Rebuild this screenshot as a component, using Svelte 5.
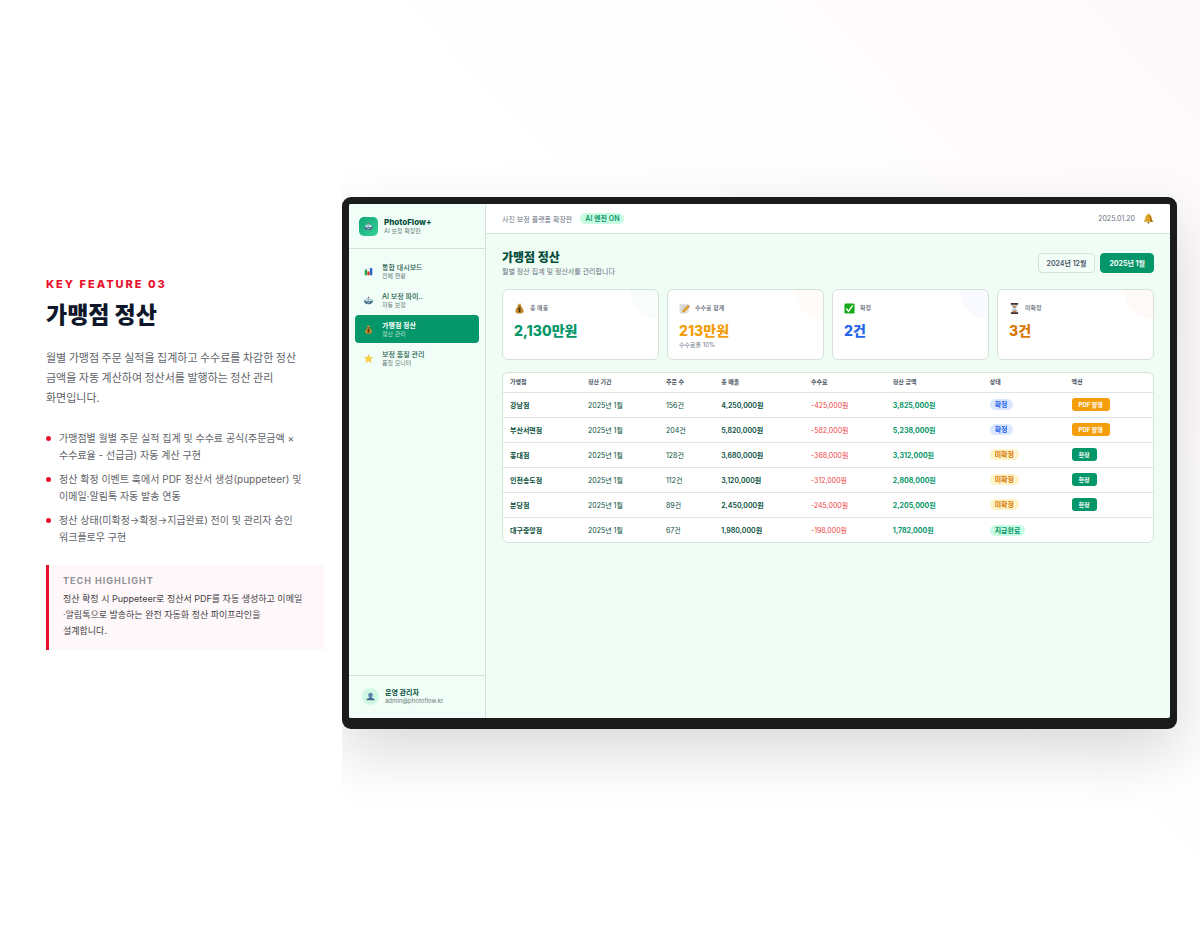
<script>
	const features = [
		'가맹점별 월별 주문 실적 집계 및 수수료 공식(주문금액 × 수수료율 - 선급금) 자동 계산 구현',
		'정산 확정 이벤트 훅에서 PDF 정산서 생성(puppeteer) 및 이메일·알림톡 자동 발송 연동',
		'정산 상태(미확정→확정→지급완료) 전이 및 관리자 승인 워크플로우 구현'
	];

	const menu = [
		{ icon: 'chart', title: '통합 대시보드', sub: '전체 현황' },
		{ icon: 'robot', title: 'AI 보정 파이..', sub: '자동 보정' },
		{ icon: 'money', title: '가맹점 정산', sub: '정산 관리' },
		{ icon: 'star', title: '보정 품질 관리', sub: '품질 모니터' }
	];

	const cards = [
		{ icon: 'money', label: '총 매출', value: '2,130만원', tone: 'green' },
		{ icon: 'memo', label: '수수료 합계', value: '213만원', note: '수수료율 10%', tone: 'amber' },
		{ icon: 'check', label: '확정', value: '2건', tone: 'blue' },
		{ icon: 'hourglass', label: '미확정', value: '3건', tone: 'orange' }
	];

	const heads = [
		{ text: '가맹점', width: 12 },
		{ text: '정산 기간', width: 12 },
		{ text: '주문 수', width: 8.5 },
		{ text: '총 매출', width: 13.8 },
		{ text: '수수료', width: 12.6 },
		{ text: '정산 금액', width: 14.9 },
		{ text: '상태', width: 12.6 },
		{ text: '액션', width: 13.6 }
	];

	const rows = [
		{ name: '강남점', orders: 156, sales: '4,250,000', fee: '425,000', total: '3,825,000', status: '확정' },
		{ name: '부산서면점', orders: 204, sales: '5,820,000', fee: '582,000', total: '5,238,000', status: '확정' },
		{ name: '홍대점', orders: 128, sales: '3,680,000', fee: '368,000', total: '3,312,000', status: '미확정' },
		{ name: '인천송도점', orders: 112, sales: '3,120,000', fee: '312,000', total: '2,808,000', status: '미확정' },
		{ name: '분당점', orders: 89, sales: '2,450,000', fee: '245,000', total: '2,205,000', status: '미확정' },
		{ name: '대구중앙점', orders: 67, sales: '1,980,000', fee: '198,000', total: '1,782,000', status: '지급완료' }
	];

	const tones = { 확정: 'blue', 미확정: 'amber', 지급완료: 'green' };

	let active = $state(2);
	let month = $state('2025년 1월');
</script>

{#snippet icon(name)}
	<svg class="icon" viewBox="0 0 24 24" aria-hidden="true">
		{#if name === 'chart'}
			<rect x="2" y="2" width="20" height="20" fill="#e8edf2" />
			<rect x="2" y="7" width="6" height="15" fill="#22a447" />
			<rect x="9" y="12" width="6" height="10" fill="#d6362c" />
			<rect x="16" y="3" width="6" height="19" fill="#2563c9" />
		{:else if name === 'robot'}
			<path d="M12 2v5" stroke="#7b98a8" stroke-width="2" />
			<circle cx="12" cy="4" r="2" fill="#b9645f" />
			<rect x="0" y="11" width="4" height="6" rx="1" fill="#4b7f9e" />
			<rect x="20" y="11" width="4" height="6" rx="1" fill="#4b7f9e" />
			<path d="M3 12q0-6 9-6t9 6v4q0 6-9 6t-9-6z" fill="#a5c3d0" />
			<path d="M3 14h18v3q-1 5-9 5t-9-5z" fill="#41667d" />
			<circle cx="8" cy="12" r="2" fill="#e9fbff" />
			<circle cx="16" cy="12" r="2" fill="#e9fbff" />
			<path d="M8 18h8" stroke="#c3d6df" stroke-width="2" />
		{:else if name === 'money'}
			<path d="M8 1q4 2 8 0l-2 6h-4z" fill="#d9a23b" />
			<path d="M9 7h6q7 6 6 12-1 4-9 4t-9-4Q2 13 9 7z" fill="#c58a2a" />
			<path d="M8 7h8" stroke="#7a4d12" stroke-width="2" />
			<path d="M15 12q-3-2-5 0t2 3 2 3-5 0M12 10v10" fill="none" stroke="#4d3310" stroke-width="2" />
		{:else if name === 'star'}
			<path
				d="M12 1l3 8h8l-6 6 2 8-7-5-7 5 2-8-6-6h8z"
				fill="#fbd23c"
				stroke="#eda918"
			/>
		{:else if name === 'memo'}
			<path d="M2 3h18v16l-3 3H2z" fill="#e6e6e3" stroke="#bdbdb8" />
			<path d="M5 7h11M5 11h8M5 15h5" stroke="#9a9fa3" />
			<path d="M20 5l3 3L12 19l-4 1 1-4z" fill="#f3a81c" stroke="#a8690c" />
			<path d="M20 5l3 3-2 2-3-3z" fill="#e67d78" />
		{:else if name === 'check'}
			<rect x="1" y="1" width="22" height="22" rx="3" fill="#14a914" />
			<path d="M5 12l5 6 9-13" fill="none" stroke="#fff" stroke-width="3" />
		{:else if name === 'hourglass'}
			<path d="M6 3h12q0 6-4 9 4 3 4 9H6q0-6 4-9-4-3-4-9z" fill="#d5dbdf" stroke="#8d959b" />
			<path d="M8 6h8q-1 4-4 5-3-1-4-5zM8 20q1-5 4-5t4 5z" fill="#b98257" />
			<path d="M4 2h16M4 22h16" stroke="#4a2f26" stroke-width="4" />
		{:else if name === 'bell'}
			<path d="M12 1q2 0 2 2 5 2 5 8 0 5 4 8H1q4-3 4-8 0-6 5-8 0-2 2-2z" fill="#dba225" />
			<path d="M14 4q4 2 4 8 0 4 4 7h-6q1-8-2-15z" fill="#96640f" />
			<circle cx="12" cy="21" r="2" fill="#8a5a0d" />
		{:else if name === 'user'}
			<path d="M12 2q6 0 6 6 0 4-3 7v2H9v-2Q6 12 6 8q0-6 6-6z" fill="#5b82a8" />
			<path d="M1 22q0-5 8-6h6q8 1 8 6z" fill="#41698f" />
		{/if}
	</svg>
{/snippet}

<main class="slide">
	<section class="intro">
		<p class="eyebrow">KEY FEATURE 03</p>
		<h1>가맹점 정산</h1>
		<p class="lead">
			월별 가맹점 주문 실적을 집계하고 수수료를 차감한 정산 금액을 자동 계산하여 정산서를 발행하는 정산 관리 화면입니다.
		</p>
		<ul class="features">
			{#each features as feature}
				<li>{feature}</li>
			{/each}
		</ul>
		<aside class="highlight">
			<h2>TECH HIGHLIGHT</h2>
			<p>
				정산 확정 시 Puppeteer로 정산서 PDF를 자동 생성하고 이메일<br />·알림톡으로 발송하는 완전 자동화 정산
				파이프라인을<br />설계합니다.
			</p>
		</aside>
	</section>

	<section class="stage">
		<div class="device">
			<div class="screen">
				<nav class="sidebar">
					<div class="brand">
						<span class="logo">{@render icon('robot')}</span>
						<div>
							<p class="brand-name">PhotoFlow+</p>
							<p class="tiny">AI 보정 확장판</p>
						</div>
					</div>
					<div class="menu">
						{#each menu as item, i}
							<button class="menu-item" class:active={i === active} onclick={() => (active = i)}>
								{@render icon(item.icon)}
								<span class="menu-text">
									<span class="menu-title">{item.title}</span>
									<span class="tiny">{item.sub}</span>
								</span>
							</button>
						{/each}
					</div>
					<div class="account">
						<span class="avatar">{@render icon('user')}</span>
						<div>
							<p class="account-name">운영 관리자</p>
							<p class="tiny">admin@photoflow.kr</p>
						</div>
					</div>
				</nav>

				<div class="content">
					<header class="topbar">
						<span>사진 보정 플랫폼 확장판</span>
						<span class="pill green">AI 엔진 ON</span>
						<time datetime="2025-01-20">2025.01.20</time>
						<button class="bell" aria-label="알림">{@render icon('bell')}</button>
					</header>

					<div class="body">
						<div class="page-head">
							<div>
								<h2>가맹점 정산</h2>
								<p>월별 정산 집계 및 정산서를 관리합니다</p>
							</div>
							<div class="months">
								{#each ['2024년 12월', '2025년 1월'] as m}
									<button class:active={m === month} onclick={() => (month = m)}>{m}</button>
								{/each}
							</div>
						</div>

						<div class="cards">
							{#each cards as card}
								<article class="card {card.tone}">
									<p class="card-label">{@render icon(card.icon)}{card.label}</p>
									<p class="card-value">{card.value}</p>
									{#if card.note}
										<p class="card-note">{card.note}</p>
									{/if}
								</article>
							{/each}
						</div>

						<div class="table-box">
							<table>
								<thead>
									<tr>
										{#each heads as head}
											<th scope="col" style="width: {head.width}%">{head.text}</th>
										{/each}
									</tr>
								</thead>
								<tbody>
									{#each rows as row}
										<tr>
											<td class="name">{row.name}</td>
											<td>2025년 1월</td>
											<td>{row.orders}건</td>
											<td class="sales">{row.sales}원</td>
											<td class="fee">-{row.fee}원</td>
											<td class="total">{row.total}원</td>
											<td><span class="pill {tones[row.status]}">{row.status}</span></td>
											<td>
												{#if row.status === '확정'}
													<button class="action pdf">PDF 발행</button>
												{:else if row.status === '미확정'}
													<button class="action">확정</button>
												{/if}
											</td>
										</tr>
									{/each}
								</tbody>
							</table>
						</div>
					</div>
				</div>
			</div>
		</div>
	</section>
</main>

<style>
	:global(body) {
		margin: 0;
		background: #fff;
	}

	.slide {
		display: grid;
		grid-template-columns: 342px minmax(0, 1fr);
		min-height: 100vh;
		color: #064e3b;
		font-family: Inter, 'Noto Sans CJK KR', sans-serif;
		word-break: keep-all;
	}

	h1,
	h2,
	p,
	ul {
		margin: 0;
		padding: 0;
	}

	button {
		border: 0;
		font-family: inherit;
		cursor: pointer;
	}

	.icon {
		display: block;
		flex: none;
		width: 9px;
		height: 9px;
	}

	/* left column */
	.intro {
		position: relative;
		z-index: 1;
		display: flex;
		flex-direction: column;
		justify-content: center;
		padding: 0 18px 0 46px;
		background: #fff;
	}

	.eyebrow {
		color: #e8112d;
		font-size: 11px;
		font-weight: 800;
		letter-spacing: 2px;
		line-height: 14px;
	}

	h1 {
		margin-top: 8px;
		color: #0f172a;
		font-size: 23px;
		font-weight: 800;
		line-height: 32px;
	}

	.lead {
		margin-top: 16px;
		color: #5f6368;
		font-family: 'Noto Sans CJK KR', sans-serif;
		font-size: 11px;
		line-height: 20px;
	}

	.features {
		display: grid;
		gap: 7px;
		margin-top: 23px;
		list-style: none;
	}

	.features li {
		display: flex;
		gap: 8px;
		color: #5f6368;
		font-size: 10px;
		line-height: 17px;
	}

	.features li::before {
		content: '';
		flex: none;
		width: 5px;
		height: 5px;
		margin-top: 6px;
		border-radius: 50%;
		background: #e8112d;
	}

	.highlight {
		margin-top: 19px;
		padding: 8px 14px 11px;
		border-left: 3px solid #e8112d;
		background: #fff8fa;
	}

	.highlight h2 {
		margin-bottom: 2px;
		color: #909096;
		font-size: 9px;
		font-weight: 700;
		letter-spacing: 1px;
		line-height: 16px;
	}

	.highlight p {
		color: #3f3f46;
		font-size: 9px;
		line-height: 16px;
	}

	/* monitor */
	.stage {
		display: flex;
		align-items: center;
		padding-right: 23px;
		background: linear-gradient(to top right, #fff 50%, #fdf9fa);
	}

	.device {
		flex: 1;
		padding: 7px 7px 11px;
		border-radius: 9px;
		background: #1b1b1b;
		box-shadow: 0 24px 60px rgba(0, 0, 0, 0.15);
	}

	.screen {
		display: grid;
		grid-template-columns: 137px minmax(0, 1fr);
		aspect-ratio: 16 / 10;
		overflow: hidden;
		border-radius: 2px;
		background: #effdf5;
	}

	.sidebar {
		display: flex;
		flex-direction: column;
		box-sizing: border-box;
		border-right: 1px solid #d5e2dc;
		background: #f1fef8;
	}

	.tiny {
		color: #6b7f7a;
		font-size: 6px;
		line-height: 8px;
	}

	.brand {
		display: flex;
		align-items: center;
		gap: 6px;
		height: 44px;
		padding-left: 10px;
		border-bottom: 1px solid #d5e2dc;
	}

	.logo {
		display: grid;
		place-items: center;
		width: 19px;
		height: 19px;
		border-radius: 5px;
		background: linear-gradient(135deg, #0fa374, #34d399);
	}

	.brand-name {
		font-size: 8px;
		font-weight: 800;
		line-height: 10px;
	}

	.menu {
		display: grid;
		gap: 1px;
		padding: 8px 6px;
	}

	.menu-item {
		display: flex;
		align-items: center;
		gap: 9px;
		height: 28px;
		padding: 0 9px;
		border-radius: 4px;
		background: none;
		color: #1f5b49;
		text-align: left;
	}

	.menu-text {
		display: grid;
	}

	.menu-title {
		font-size: 7px;
		font-weight: 500;
		line-height: 9px;
	}

	.menu-item.active {
		background: #059669;
		color: #fff;
	}

	.active .menu-title {
		font-weight: 700;
	}

	.active .tiny {
		color: #b9e3d3;
	}

	.account {
		display: flex;
		align-items: center;
		gap: 6px;
		height: 42px;
		margin-top: auto;
		padding-left: 13px;
		border-top: 1px solid #d5e2dc;
	}

	.avatar {
		display: grid;
		place-items: center;
		width: 17px;
		height: 17px;
		border-radius: 50%;
		background: #cff8e4;
	}

	.account-name {
		font-size: 7px;
		font-weight: 700;
		line-height: 8px;
	}

	.topbar {
		display: flex;
		align-items: center;
		gap: 8px;
		height: 29px;
		padding: 0 16px;
		border-bottom: 1px solid #d5e2dc;
		background: #fff;
		color: #6b7280;
		font-size: 7px;
	}

	.topbar time {
		margin-left: auto;
	}

	.bell {
		padding: 0;
		background: none;
	}

	.bell .icon {
		width: 11px;
		height: 11px;
	}

	.pill {
		display: inline-block;
		padding: 0 5px;
		border-radius: 6px;
		font-size: 7px;
		font-weight: 600;
		line-height: 11px;
	}

	.pill.green {
		background: #c9fbe2;
		color: #059669;
	}

	.pill.blue {
		background: #dbe7fe;
		color: #2563eb;
	}

	.pill.amber {
		background: #fef3c7;
		color: #d97706;
	}

	.body {
		padding: 15px 16px;
	}

	.page-head {
		display: flex;
		align-items: center;
		justify-content: space-between;
	}

	.page-head h2 {
		font-size: 12px;
		font-weight: 800;
		line-height: 17px;
	}

	.page-head p {
		color: #6b7280;
		font-size: 7px;
		line-height: 11px;
	}

	.months {
		display: flex;
		gap: 5px;
	}

	.months button {
		height: 20px;
		padding: 0 8px;
		border: 1px solid #d5e2dc;
		border-radius: 4px;
		background: #f4fef9;
		color: #4b5563;
		font-size: 7px;
		font-weight: 600;
	}

	.months .active {
		border-color: #059669;
		background: #059669;
		color: #fff;
		font-weight: 700;
	}

	.cards {
		display: grid;
		grid-template-columns: repeat(4, 1fr);
		gap: 8px;
		margin-top: 12px;
	}

	.card {
		box-sizing: border-box;
		height: 71px;
		padding: 12px 11px 0;
		border: 1px solid #d5e2dc;
		border-radius: 6px;
	}

	.card.green {
		background: radial-gradient(circle at 100% 0, #f8fcfa 28px, #fff 29px);
		color: #059669;
	}

	.card.amber {
		background: radial-gradient(circle at 100% 0, #fffbf8 28px, #fff 29px);
		color: #f59e0b;
	}

	.card.blue {
		background: radial-gradient(circle at 100% 0, #f8faff 28px, #fff 29px);
		color: #2563eb;
	}

	.card.orange {
		background: radial-gradient(circle at 100% 0, #fffaf7 28px, #fff 29px);
		color: #d97706;
	}

	.card-label {
		display: flex;
		align-items: center;
		gap: 5px;
		color: #5b6470;
		font-size: 6px;
		font-weight: 500;
		line-height: 12px;
	}

	.card .icon {
		width: 11px;
		height: 11px;
	}

	.card-value {
		margin-top: 8px;
		font-size: 14px;
		font-weight: 800;
		line-height: 18px;
	}

	.card-note {
		color: #6b7280;
		font-size: 6px;
		line-height: 10px;
	}

	.table-box {
		margin-top: 12px;
		overflow: hidden;
		border: 1px solid #d5e2dc;
		border-radius: 6px;
		background: #fff;
	}

	table {
		width: 100%;
		border-collapse: collapse;
		table-layout: fixed;
	}

	th,
	td {
		box-sizing: border-box;
		height: 25px;
		padding: 0 7px;
		border-top: 1px solid #dfe4e4;
		font-size: 7px;
		font-weight: 400;
		text-align: left;
		white-space: nowrap;
	}

	th {
		height: 19px;
		padding-bottom: 2px;
		border-top: 0;
		color: #4b5563;
		font-size: 6px;
		font-weight: 600;
	}

	.name,
	.total {
		font-weight: 700;
	}

	.sales {
		font-weight: 600;
	}

	.fee {
		color: #ef4444;
	}

	.total {
		color: #059669;
	}

	.action {
		display: block;
		height: 13px;
		padding: 0 7px;
		border-radius: 3px;
		background: #059669;
		color: #fff;
		font-size: 6px;
		font-weight: 700;
	}

	.action.pdf {
		background: #f59e0b;
	}
</style>
